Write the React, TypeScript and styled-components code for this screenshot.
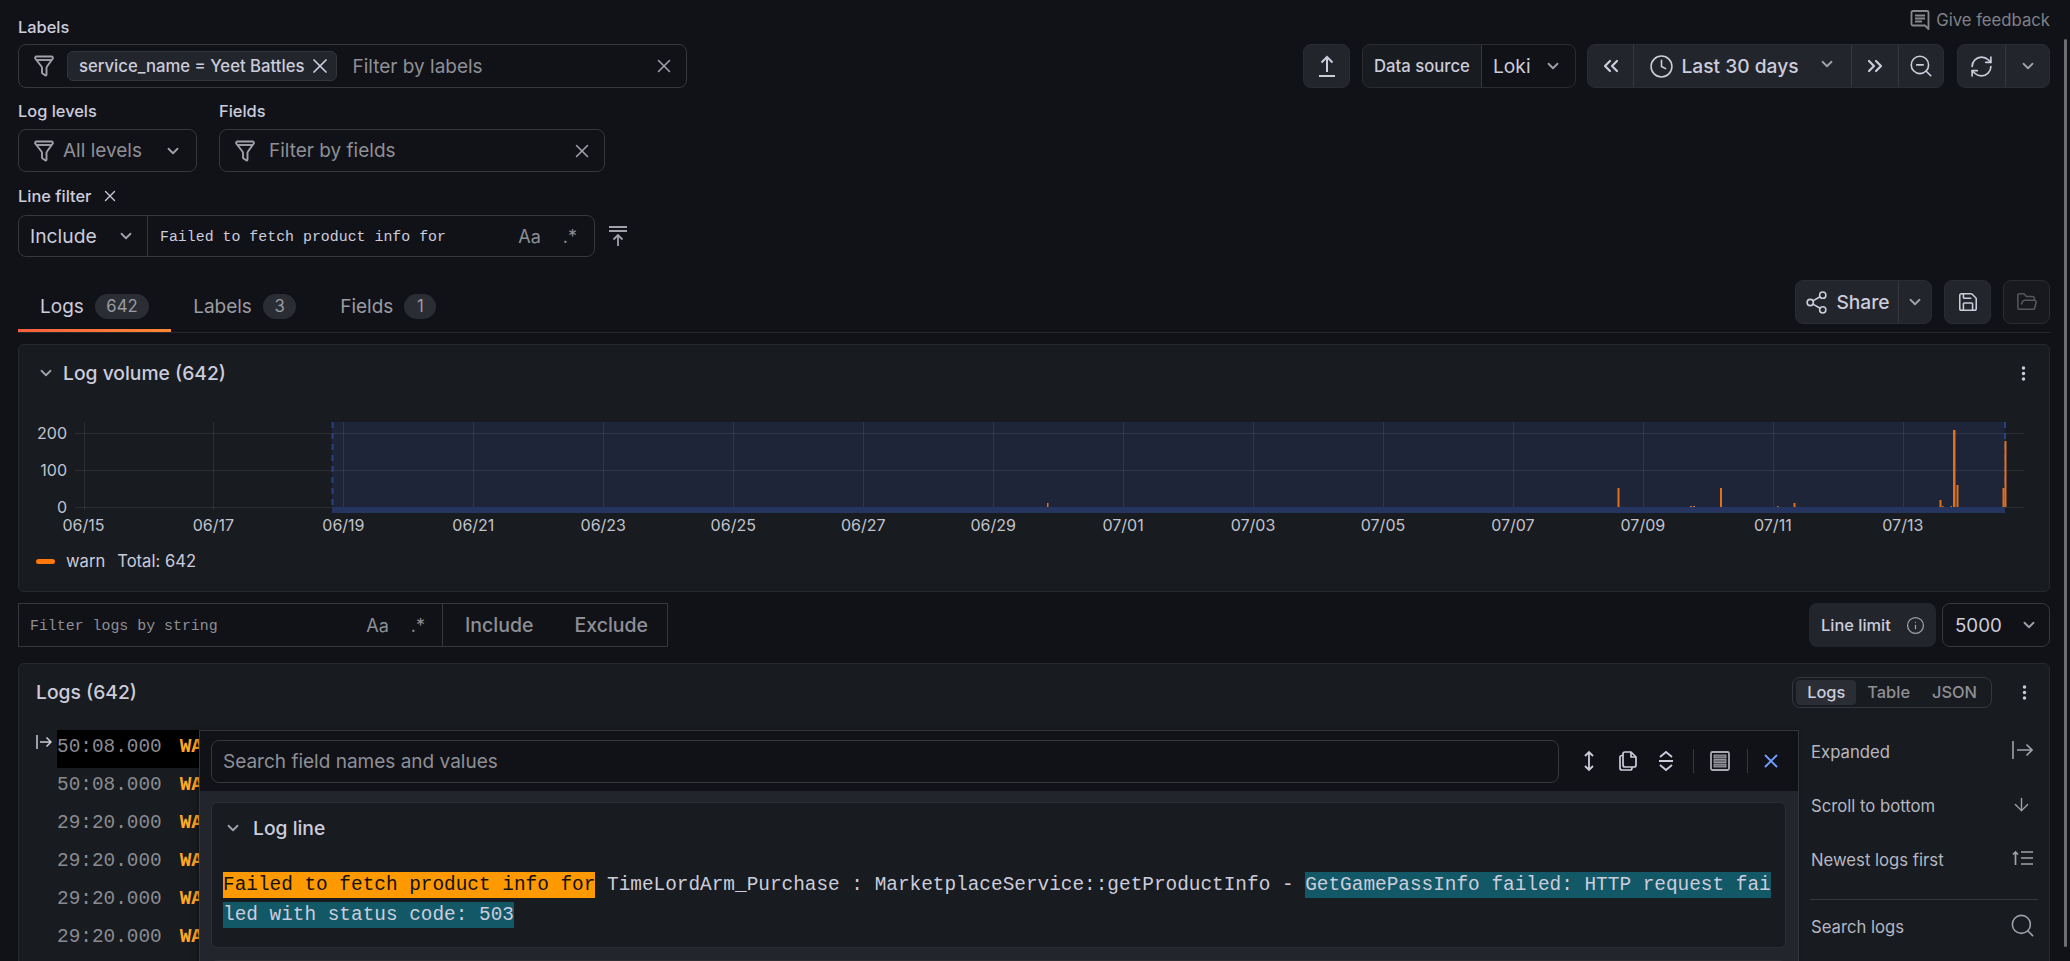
import React from 'react'
import styled, { createGlobalStyle } from 'styled-components'
import {
  ArrowDown,
  ChevronDown,
  ChevronsLeft,
  ChevronsRight,
  Clock,
  EllipsisVertical,
  FolderOpen,
  Info,
  RefreshCw,
  Save,
  Search,
  Share2,
  X,
  ZoomOut
} from 'lucide-react'

const GlobalStyle = createGlobalStyle`
  html, body {
    margin: 0;
    padding: 0;
    background: #111217;
    overflow: hidden;
  }
  body {
    font-family: Inter, "Liberation Sans", sans-serif;
    color: #ccccdc;
  }
  * {
    box-sizing: border-box;
  }
`

const border = '#36373d'
const softBorder = '#2a2c32'
const gridLine = 'rgba(204, 204, 220, 0.1)'
const mono = '"Liberation Mono", "DejaVu Sans Mono", monospace'

const Page = styled.div`
  position: relative;
  width: 2070px;
  height: 961px;
  overflow: hidden;
  padding: 0 20px 0 18px;
`

const Scrollbar = styled.div`
  position: absolute;
  top: 39px;
  right: 3px;
  width: 3px;
  height: 908px;
  border-radius: 2px;
  background: #6c6e74;
`

const TopBar = styled.div`
  display: flex;
  justify-content: space-between;
  align-items: flex-start;
`

const Filters = styled.div`
  padding-top: 18px;
`

const FieldLabel = styled.div<{ $top?: number; $bottom?: number }>`
  display: flex;
  align-items: center;
  gap: 10px;
  height: 18px;
  margin-top: ${(p) => p.$top || 0}px;
  margin-bottom: ${(p) => p.$bottom || 8}px;
  font-size: 16.4px;
  font-weight: 500;
  color: #ccccdc;
`

const FilterRow = styled.div`
  display: flex;
  gap: 22px;
`

const FilterBox = styled.div<{ $width: number; $height: number }>`
  display: flex;
  align-items: center;
  width: ${(p) => p.$width}px;
  height: ${(p) => p.$height}px;
  padding: 0 11px 0 14px;
  border: 1px solid ${border};
  border-radius: 8px;
  font-size: 19px;
  color: #8e8f96;
`

const FilterIcon = styled.svg`
  flex: none;
  width: 22px;
  height: 22px;
  color: #a1a2a9;
`

const Chip = styled.div`
  display: flex;
  align-items: center;
  gap: 4px;
  height: 30px;
  margin-left: 12px;
  padding: 0 4px 0 11px;
  border: 1px solid #33353b;
  border-radius: 6px;
  background: #22252b;
  color: #ccccdc;
  font-size: 16.7px;
  font-weight: 500;
  white-space: nowrap;
`

const Placeholder = styled.span<{ $left: number }>`
  flex: 1;
  margin-left: ${(p) => p.$left}px;
  white-space: nowrap;
`

const GrayIcon = styled.span<{ $color?: string }>`
  display: inline-flex;
  flex: none;
  color: ${(p) => p.$color || '#a1a2a9'};
`

const ChevronSlot = styled.span`
  display: inline-flex;
  margin-right: 3px;
`

const LineFilter = styled.div`
  display: flex;
  align-items: center;
`

const LineFilterBox = styled.div`
  display: flex;
  align-items: center;
  width: 577px;
  height: 42px;
  border: 1px solid ${border};
  border-radius: 8px;
`

const IncludeSelect = styled.div`
  display: flex;
  align-items: center;
  justify-content: space-between;
  width: 129px;
  height: 100%;
  padding: 0 12px 0 11px;
  border-right: 1px solid ${border};
  font-size: 19.3px;
`

const MonoInput = styled.div<{ $color?: string; $left?: number }>`
  flex: 1;
  padding-top: 2px;
  padding-left: ${(p) => p.$left ?? 12}px;
  font-family: ${mono};
  font-size: 14.9px;
  color: ${(p) => p.$color || '#ccccdc'};
  white-space: nowrap;
`

const CaseToggles = styled.div`
  display: flex;
  align-items: center;
  gap: 22px;
  padding-right: 17px;
  font-size: 18px;
  font-weight: 400;
  color: #8e8f96;
`

const Toolbar = styled.div`
  display: flex;
  margin-top: 14px;
`

const Feedback = styled.div`
  display: flex;
  justify-content: flex-end;
  align-items: center;
  gap: 6px;
  height: 20px;
  font-size: 16.7px;
  color: #7f8187;
`

const RightColumn = styled.div`
  padding-top: 10px;
`

const ButtonGroup = styled.div<{ $gap?: number; $muted?: boolean }>`
  display: flex;
  height: 44px;
  margin-right: ${(p) => p.$gap || 0}px;
  border: 1px solid ${softBorder};
  border-radius: 8px;
  background: ${(p) => (p.$muted ? '#17191e' : '#22252b')};
  overflow: hidden;
  font-size: 19.2px;
  font-weight: 500;
`

const ToolButton = styled.div<{ $width: number; $divider?: boolean; $faded?: boolean }>`
  display: flex;
  align-items: center;
  justify-content: center;
  gap: 7px;
  width: ${(p) => p.$width}px;
  border-right: ${(p) => (p.$divider ? `1px solid ${border}` : 'none')};
  color: ${(p) => (p.$faded ? '#56575c' : '#ccccdc')};
`

const DataSourceLabel = styled.div`
  display: flex;
  align-items: center;
  justify-content: center;
  width: 119px;
  border-right: 1px solid ${border};
  background: #181b1f;
  font-size: 16.7px;
`

const DataSourceValue = styled.div`
  display: flex;
  width: 93px;
  align-items: center;
  justify-content: space-between;
  padding: 0 13px 0 11px;
  background: #111217;
  font-weight: 400;
`

const TabsRow = styled.div`
  display: flex;
  justify-content: space-between;
  align-items: flex-start;
  height: 53px;
  margin-top: 23px;
  border-bottom: 1px solid #26282e;
`

const TabList = styled.div`
  display: flex;
`

const Tab = styled.div<{ $active?: boolean }>`
  position: relative;
  display: flex;
  align-items: center;
  gap: 11px;
  height: 52px;
  padding: 0 22px;
  font-size: 19px;
  color: ${(p) => (p.$active ? '#ccccdc' : '#9a9ba3')};

  &::after {
    content: '';
    display: ${(p) => (p.$active ? 'block' : 'none')};
    position: absolute;
    left: 0;
    right: 0;
    bottom: 0;
    height: 3px;
    background: linear-gradient(90deg, #f55f3e, #ff8833);
  }
`

const Badge = styled.span`
  display: inline-flex;
  align-items: center;
  justify-content: center;
  height: 25px;
  min-width: 32px;
  padding: 0 11.5px;
  border-radius: 13px;
  background: #2a2d33;
  font-size: 16.7px;
  color: #9a9ba3;
`

const ShareTools = styled.div`
  display: flex;
`

const Panel = styled.section<{ $top: number }>`
  margin-top: ${(p) => p.$top}px;
  border: 1px solid #26282e;
  border-radius: 6px;
  background: #181b1f;
`

const VolumeHeader = styled.div`
  display: flex;
  align-items: center;
  justify-content: space-between;
  height: 56px;
  padding: 0 16px 0 18px;
`

const PanelTitle = styled.div<{ $gap?: number }>`
  display: flex;
  align-items: center;
  gap: ${(p) => p.$gap ?? 8}px;
  font-size: 19.3px;
  font-weight: 500;
  color: #ccccdc;
`

const Chart = styled.svg`
  display: block;
  margin-top: 14px;
`

const Legend = styled.div`
  display: flex;
  align-items: center;
  height: 42px;
  margin-bottom: 9px;
  padding-left: 17px;
  font-size: 16.6px;
  color: #ccccdc;
`

const LegendSwatch = styled.span`
  width: 19px;
  height: 5px;
  margin-right: 11px;
  border-radius: 3px;
  background: #ff780a;
`

const LegendTotal = styled.span`
  margin-left: 12px;
`

const LogControls = styled.div`
  display: flex;
  justify-content: space-between;
  height: 44px;
  margin-top: 11px;
`

const StringFilter = styled.div`
  display: flex;
  width: 650px;
  border: 1px solid ${border};
  font-size: 19.5px;
  font-weight: 500;
  color: #8e8f96;
`

const StringInput = styled.div`
  display: flex;
  align-items: center;
  width: 424px;
  border-right: 1px solid ${border};
`

const StringActions = styled.div`
  display: flex;
  align-items: center;
  gap: 41px;
  padding-left: 22px;
`

const LimitTools = styled.div`
  display: flex;
  gap: 6px;
`

const LimitLabel = styled.div`
  display: flex;
  align-items: center;
  justify-content: space-between;
  width: 127px;
  padding: 0 11px 0 12px;
  border-radius: 8px;
  background: #22252b;
  font-size: 16.4px;
  font-weight: 500;
`

const LimitSelect = styled.div`
  display: flex;
  align-items: center;
  justify-content: space-between;
  width: 108px;
  padding: 0 11px 0 12px;
  border: 1px solid ${border};
  border-radius: 8px;
  font-size: 18.7px;
`

const LogsPanel = styled(Panel)`
  position: relative;
  height: 420px;
`

const LogsHeader = styled.div`
  display: flex;
  align-items: center;
  justify-content: space-between;
  height: 56px;
  padding: 0 15px 0 17px;
`

const ViewSwitch = styled.div`
  display: flex;
  align-items: center;
  gap: 23px;
`

const Segments = styled.div`
  display: flex;
  align-items: center;
  height: 31px;
  padding: 0 3px;
  border: 1px solid ${border};
  border-radius: 8px;
  font-size: 16.4px;
  font-weight: 500;
  color: #8e8f96;
`

const Segment = styled.span<{ $active?: boolean }>`
  display: flex;
  align-items: center;
  height: 25px;
  padding: 0 11px;
  border-radius: 4px;
  background: ${(p) => (p.$active ? '#2a2d33' : 'transparent')};
  color: ${(p) => (p.$active ? '#ccccdc' : '#8e8f96')};
`

const LogsBody = styled.div`
  display: flex;
  justify-content: space-between;
  margin-top: 10px;
  padding-left: 17px;
`

const LogRowsArea = styled.div`
  display: flex;
  gap: 5px;
`

const GutterIcon = styled.svg`
  width: 16px;
  height: 20px;
  margin-top: 2px;
  color: #ccccdc;
`

const LogRows = styled.div`
  width: 1400px;
`

const LogRow = styled.div<{ $selected?: boolean }>`
  display: flex;
  gap: 18px;
  height: 38px;
  background: ${(p) => (p.$selected ? '#000' : 'transparent')};
  font-family: ${mono};
  font-size: 19.4px;
  line-height: 35px;
  color: #8a8b92;
  white-space: nowrap;
`

const LogLevel = styled.span`
  font-weight: 700;
  color: #ffa726;
`

const SideMenu = styled.div`
  width: 228px;
  margin-top: 1px;
  margin-right: 11px;
  font-size: 16.7px;
  color: #b6b7c2;
`

const MenuItem = styled.div<{ $bottom?: number }>`
  display: flex;
  align-items: center;
  justify-content: space-between;
  height: 42px;
  margin-bottom: ${(p) => p.$bottom ?? 12}px;
  padding-left: 1px;

  svg {
    margin-bottom: 4px;
  }
`

const MenuDivider = styled.div`
  height: 1px;
  margin: 18px 0 6px;
  background: #36373d;
`

const MenuGlyph = styled.span<{ $right: number }>`
  display: inline-flex;
  margin-right: ${(p) => p.$right}px;
  color: #a1a2a9;
`

const Drawer = styled.aside`
  position: absolute;
  top: 66px;
  left: 180px;
  width: 1600px;
  height: 300px;
  border: 1px solid #33353a;
  background: #22252b;
  box-shadow: -2px 0 6px rgba(0, 0, 0, 0.3);
`

const DrawerHeader = styled.div`
  display: flex;
  align-items: center;
  height: 60px;
  padding: 0 16px 0 11px;
  background: #111217;
`

const DrawerSearch = styled.div`
  display: flex;
  flex: 1;
  align-items: center;
  height: 43px;
  padding: 0 11px;
  border: 1px solid ${border};
  border-radius: 8px;
  font-size: 19px;
  color: #8e8f96;
`

const DrawerTools = styled.div`
  display: flex;
  align-items: center;
  gap: 18.5px;
  margin-left: 20px;
  color: #ccccdc;
`

const ToolDivider = styled.span`
  width: 1px;
  height: 24px;
  margin: 0 -2px;
  background: #36373d;
`

const CloseGlyph = styled.span`
  display: inline-flex;
  margin-left: -4px;
  color: #6e9fff;
`

const DrawerBody = styled.div`
  padding: 11px 12px 0 11px;
`

const FieldBox = styled.div`
  height: 146px;
  margin-bottom: 12px;
  border: 1px solid #2c2e34;
  border-radius: 6px;
  background: #181b1f;
`

const FieldBoxHeader = styled.div`
  display: flex;
  align-items: center;
  height: 50px;
  padding-left: 12px;
`

const LogLine = styled.div`
  padding: 17px 11px 0;
  font-family: ${mono};
  font-size: 19.4px;
  line-height: 30px;
  color: #ccccdc;
  white-space: pre;
`

const Match = styled.mark`
  padding: 2px 0;
  background: #ff9900;
  color: #111;
`

const Highlight = styled.mark`
  padding: 2px 0;
  background: #135866;
  color: #ccccdc;
`

const funnel = (
  <FilterIcon viewBox="0 0 22 22" fill="none" stroke="currentColor" strokeWidth="1.9" strokeLinejoin="round">
    <path d="M3.5 1.5h15c1.2 0 1.6 1 1.3 2L14 11.5c-.4.5-.5 1-.5 1.6v6.4c0 .8-.7 1.2-1.3.8l-2.700-1.800c-.3-.2-.5-.6-.5-1v-4.400c0-.6-.1-1.100-.5-1.600L2.200 3.500c-.3-1 .1-2 1.300-2Z" />
    <path d="M3 5h16" />
  </FilterIcon>
)

const chevron = (size = 18) => (
  <GrayIcon>
    <ChevronDown size={size} strokeWidth={2.4} />
  </GrayIcon>
)

const cross = (size = 22, color?: string) => (
  <GrayIcon $color={color}>
    <X size={size} strokeWidth={1.7} />
  </GrayIcon>
)

const tickLabels = [
  '06/15', '06/17', '06/19', '06/21', '06/23', '06/25', '06/27', '06/29',
  '07/01', '07/03', '07/05', '07/07', '07/09', '07/11', '07/13'
]

const bars: Array<[number, number, number]> = [
  [1047, 503, 1.5], [1617.5, 488, 2], [1690, 506, 2], [1693, 506, 2],
  [1720, 488, 2], [1777, 506, 1.5], [1793.5, 503, 2], [1939.5, 500, 2],
  [1942, 506, 1.5], [1950.5, 506, 1.5], [1953, 430, 2.5], [1956.5, 485, 2],
  [2002.5, 488, 2], [2004.5, 441, 2]
]

const VolumeChart = () => (
  <Chart width={2030} height={125} viewBox="19 415 2030 125">
    <rect x={332} y={422} width={1673} height={91} fill="#1e2538" />
    {[433, 470, 507].map((y) => (
      <line key={y} x1={75} x2={2024} y1={y + 0.5} y2={y + 0.5} stroke={gridLine} />
    ))}
    {tickLabels.map((_, i) => {
      const x = Math.round(83.5 + i * 129.95) + 0.5
      return <line key={i} x1={x} x2={x} y1={422} y2={510} stroke={gridLine} />
    })}
    <rect x={332} y={507} width={1673} height={6} fill="#253560" />
    <line x1={332.5} x2={332.5} y1={422} y2={507} stroke="#2a4080" strokeWidth={2} strokeDasharray="6 5" />
    <line x1={2005} x2={2005} y1={422} y2={507} stroke="#2a4080" strokeWidth={2} strokeDasharray="6 5" />
    {bars.map(([x, top, w], i) => (
      <rect key={i} x={x} y={top} width={w} height={507 - top} fill="#e0701c" />
    ))}
    <g fontFamily="Inter, sans-serif" fontSize="16" fill="#c2c3cc">
      {[[433, '200'], [470, '100'], [507, '0']].map(([y, t]) => (
        <text key={t} x={67} y={Number(y) + 5.5} textAnchor="end">{t}</text>
      ))}
      {tickLabels.map((t, i) => (
        <text key={t} x={83.5 + i * 129.95} y={531} textAnchor="middle">{t}</text>
      ))}
    </g>
  </Chart>
)

const times = ['50:08.000', '50:08.000', '29:20.000', '29:20.000', '29:20.000', '29:20.000']

export default function App() {
  return (
    <>
      <GlobalStyle />
      <Page>
        <TopBar>
          <Filters>
            <FieldLabel>Labels</FieldLabel>
            <FilterBox $width={669} $height={44}>
              {funnel}
              <Chip>service_name = Yeet Battles {cross(24, '#ccccdc')}</Chip>
              <Placeholder $left={15}>Filter by labels</Placeholder>
              {cross()}
            </FilterBox>
            <FilterRow>
              <div>
                <FieldLabel $top={14} $bottom={9}>Log levels</FieldLabel>
                <FilterBox $width={179} $height={43}>
                  {funnel}
                  <Placeholder $left={8}>All levels</Placeholder>
                  <ChevronSlot>{chevron()}</ChevronSlot>
                </FilterBox>
              </div>
              <div>
                <FieldLabel $top={14} $bottom={9}>Fields</FieldLabel>
                <FilterBox $width={386} $height={43}>
                  {funnel}
                  <Placeholder $left={13}>Filter by fields</Placeholder>
                  {cross()}
                </FilterBox>
              </div>
            </FilterRow>
            <FieldLabel $top={15} $bottom={10}>Line filter {cross(18, '#ccccdc')}</FieldLabel>
            <LineFilter>
              <LineFilterBox>
                <IncludeSelect>Include {chevron()}</IncludeSelect>
                <MonoInput>Failed to fetch product info for</MonoInput>
                <CaseToggles>
                  <span>Aa</span>
                  <span>.*</span>
                </CaseToggles>
              </LineFilterBox>
              <GrayIcon style={{ marginLeft: 13 }}>
                <svg width="20" height="22" viewBox="0 0 20 22" fill="none" stroke="currentColor" strokeWidth="1.8">
                  <path d="M1 2h18M1 6h18M10 21V10M5.5 14.5 10 10l4.500 4.500" />
                </svg>
              </GrayIcon>
            </LineFilter>
          </Filters>
          <RightColumn>
            <Feedback>
              <svg width="20" height="22" viewBox="0 0 20 22" fill="none" stroke="#85878d" strokeWidth="1.8" strokeLinejoin="round">
                <path d="M3 2h14a1.500 1.500 0 0 1 1.500 1.500V20L15 16.500H3A1.500 1.500 0 0 1 1.500 15V3.500A1.500 1.500 0 0 1 3 2Z" />
                <path d="M5 6.500h10M5 9.500h10M5 12.500h7" />
              </svg>
              Give feedback
            </Feedback>
            <Toolbar>
              <ButtonGroup $gap={12}>
                <ToolButton $width={45}>
                  <svg width="18" height="24" viewBox="0 0 18 24" fill="none" stroke="#ccccdc" strokeWidth="2">
                    <path d="M9 18V3M3.500 8.500 9 3l5.500 5.500M1 22h16" />
                  </svg>
                </ToolButton>
              </ButtonGroup>
              <ButtonGroup $gap={11}>
                <DataSourceLabel>Data source</DataSourceLabel>
                <DataSourceValue>Loki {chevron()}</DataSourceValue>
              </ButtonGroup>
              <ButtonGroup $gap={13}>
                <ToolButton $width={46} $divider><ChevronsLeft size={24} strokeWidth={2.2} /></ToolButton>
                <ToolButton $width={218} $divider>
                  <Clock size={25} strokeWidth={1.5} />
                  <span>Last 30 days</span>
                  <span style={{ marginLeft: 12 }}>{chevron()}</span>
                </ToolButton>
                <ToolButton $width={47} $divider><ChevronsRight size={24} strokeWidth={2.2} /></ToolButton>
                <ToolButton $width={44}><ZoomOut size={26} strokeWidth={1.5} /></ToolButton>
              </ButtonGroup>
              <ButtonGroup>
                <ToolButton $width={48} $divider><RefreshCw size={25} strokeWidth={1.6} /></ToolButton>
                <ToolButton $width={43}>{chevron()}</ToolButton>
              </ButtonGroup>
            </Toolbar>
          </RightColumn>
        </TopBar>

        <TabsRow>
          <TabList>
            <Tab $active>Logs <Badge>642</Badge></Tab>
            <Tab>Labels <Badge>3</Badge></Tab>
            <Tab>Fields <Badge>1</Badge></Tab>
          </TabList>
          <ShareTools>
            <ButtonGroup $gap={12}>
              <ToolButton $width={103} $divider>
                <Share2 size={25} strokeWidth={1.5} />
                <span>Share</span>
              </ToolButton>
              <ToolButton $width={32}>{chevron()}</ToolButton>
            </ButtonGroup>
            <ButtonGroup $gap={12}>
              <ToolButton $width={45}><Save size={22} strokeWidth={1.7} /></ToolButton>
            </ButtonGroup>
            <ButtonGroup $muted>
              <ToolButton $width={45} $faded><FolderOpen size={22} strokeWidth={1.7} /></ToolButton>
            </ButtonGroup>
          </ShareTools>
        </TabsRow>

        <Panel $top={11}>
          <VolumeHeader>
            <PanelTitle>{chevron()} Log volume (642)</PanelTitle>
            <GrayIcon $color="#ccccdc"><EllipsisVertical size={19} strokeWidth={2.4} /></GrayIcon>
          </VolumeHeader>
          <VolumeChart />
          <Legend>
            <LegendSwatch />
            warn
            <LegendTotal>Total: 642</LegendTotal>
          </Legend>
        </Panel>

        <LogControls>
          <StringFilter>
            <StringInput>
              <MonoInput $color="#8e8f96" $left={11}>Filter logs by string</MonoInput>
              <CaseToggles>
                <span>Aa</span>
                <span>.*</span>
              </CaseToggles>
            </StringInput>
            <StringActions>
              <span>Include</span>
              <span>Exclude</span>
            </StringActions>
          </StringFilter>
          <LimitTools>
            <LimitLabel>
              Line limit
              <GrayIcon><Info size={19} strokeWidth={1.6} /></GrayIcon>
            </LimitLabel>
            <LimitSelect>5000 {chevron()}</LimitSelect>
          </LimitTools>
        </LogControls>

        <LogsPanel $top={16}>
          <LogsHeader>
            <PanelTitle>Logs (642)</PanelTitle>
            <ViewSwitch>
              <Segments>
                <Segment $active>Logs</Segment>
                <Segment>Table</Segment>
                <Segment>JSON</Segment>
              </Segments>
              <GrayIcon $color="#ccccdc"><EllipsisVertical size={19} strokeWidth={2.4} /></GrayIcon>
            </ViewSwitch>
          </LogsHeader>
          <LogsBody>
            <LogRowsArea>
              <GutterIcon viewBox="0 0 16 20" fill="none" stroke="currentColor" strokeWidth="1.500">
                <path d="M1 3v14M4 10h11M10.500 5.500 15 10l-4.500 4.500" />
              </GutterIcon>
              <LogRows>
                {times.map((time, i) => (
                  <LogRow key={i} $selected={i === 0}>
                    <span>{time}</span>
                    <LogLevel>WARN</LogLevel>
                  </LogRow>
                ))}
              </LogRows>
            </LogRowsArea>
            <SideMenu>
              <MenuItem>
                Expanded
                <MenuGlyph $right={5}>
                  <svg width="21" height="20" viewBox="0 0 21 20" fill="none" stroke="currentColor" strokeWidth="1.600">
                    <path d="M1 1v18M5 10h15M14.500 4.500 20 10l-5.500 5.500" />
                  </svg>
                </MenuGlyph>
              </MenuItem>
              <MenuItem>
                Scroll to bottom
                <MenuGlyph $right={6}><ArrowDown size={21} strokeWidth={1.6} /></MenuGlyph>
              </MenuItem>
              <MenuItem $bottom={0}>
                Newest logs first
                <MenuGlyph $right={5}>
                  <svg width="21" height="16" viewBox="0 0 21 16" fill="none" stroke="currentColor" strokeWidth="1.700">
                    <path d="M3.500 15V2M1 4.500 3.500 2 6 4.500M9 2h12M9 8h12M9 14h12" />
                  </svg>
                </MenuGlyph>
              </MenuItem>
              <MenuDivider />
              <MenuItem $bottom={0}>
                Search logs
                <MenuGlyph $right={2}><Search size={27} strokeWidth={1.4} /></MenuGlyph>
              </MenuItem>
            </SideMenu>
          </LogsBody>
          <Drawer>
            <DrawerHeader>
              <DrawerSearch>Search field names and values</DrawerSearch>
              <DrawerTools>
                <svg width="20" height="22" viewBox="0 0 20 22" fill="none" stroke="currentColor" strokeWidth="1.800">
                  <path d="M10 2v18M6 6l4-4 4 4M6 16l4 4 4-4" />
                </svg>
                <svg width="20" height="22" viewBox="0 0 20 22" fill="none" stroke="currentColor" strokeWidth="1.700" strokeLinejoin="round">
                  <path d="M7 2h6l5 5v8a2 2 0 0 1-2 2H7a2 2 0 0 1-2-2V4a2 2 0 0 1 2-2Z" />
                  <path d="M13 2v5h5M5 5.500H4a2 2 0 0 0-2 2V18a2 2 0 0 0 2 2h8a2 2 0 0 0 2-2v-1" />
                </svg>
                <svg width="20" height="22" viewBox="0 0 20 22" fill="none" stroke="currentColor" strokeWidth="1.800">
                  <path d="M4 7l6-5 6 5M4 15l6 5 6-5M3 11h14" />
                </svg>
                <ToolDivider />
                <svg width="20" height="22" viewBox="0 0 20 22" fill="none" stroke="#a9aab3" strokeWidth="1.800">
                  <rect x="1" y="2" width="18" height="18" rx="1.500" />
                  <rect x="4" y="5" width="12" height="3" fill="#6c6e74" strokeWidth="0.800" />
                  <rect x="4" y="9.500" width="12" height="3" fill="#6c6e74" strokeWidth="0.800" />
                  <rect x="4" y="14" width="12" height="3" fill="#6c6e74" strokeWidth="0.800" />
                </svg>
                <ToolDivider />
                <CloseGlyph><X size={22} strokeWidth={2} /></CloseGlyph>
              </DrawerTools>
            </DrawerHeader>
            <DrawerBody>
              <FieldBox>
                <FieldBoxHeader>
                  <PanelTitle $gap={11}>{chevron()} Log line</PanelTitle>
                </FieldBoxHeader>
                <LogLine>
                  <div>
                    <Match>Failed to fetch product info for</Match>
                    {' TimeLordArm_Purchase : MarketplaceService::getProductInfo - '}
                    <Highlight>GetGamePassInfo failed: HTTP request fai</Highlight>
                  </div>
                  <div>
                    <Highlight>led with status code: 503</Highlight>
                  </div>
                </LogLine>
              </FieldBox>
              <FieldBox />
            </DrawerBody>
          </Drawer>
        </LogsPanel>
        <Scrollbar />
      </Page>
    </>
  )
}
